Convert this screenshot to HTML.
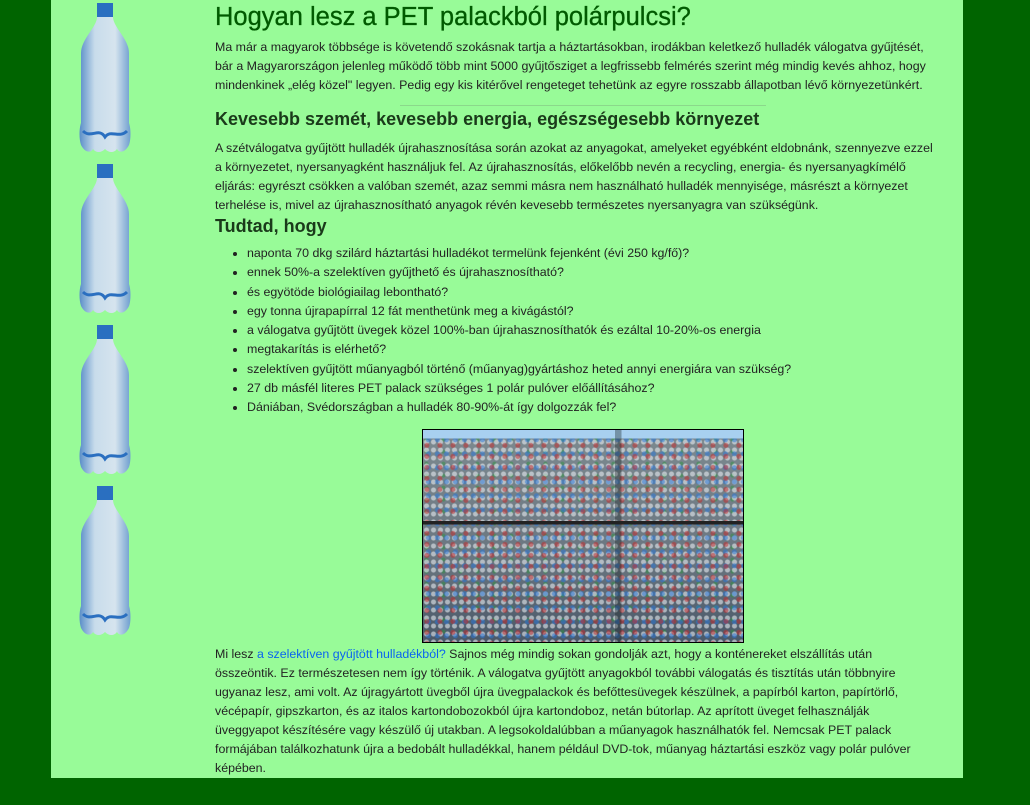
<!DOCTYPE html>
<html><head><meta charset="utf-8">
<style>
html,body{margin:0;padding:0;background:#006400;width:1030px;height:805px;overflow:hidden}
body{font-family:"Liberation Sans",sans-serif;color:#222}
#wrap{position:absolute;left:51px;top:0;width:912px;height:778px;background:#98fb98}
.b{position:absolute;left:28px;width:52px;height:152px}
#c{position:absolute;left:164px;top:0;width:750px;font-size:12.4px;line-height:19px}
#c .l{white-space:nowrap}
h1{position:absolute;left:0;top:0;margin:0;font-size:25.5px;font-weight:normal;color:#005a00;line-height:34px;-webkit-text-stroke:0.3px #005a00}
h2{position:absolute;left:0;margin:0;font-size:18px;font-weight:bold;color:#1a3a1a;line-height:24px}
.p{position:absolute;left:0}
ul{position:absolute;left:0;margin:0;padding-left:32px;top:244px}
li{line-height:19.3px;white-space:nowrap}
a{color:#0a64f0;text-decoration:none}
#img{position:absolute;left:207px;top:429px;width:320px;height:212px;border:1px solid #000;
background:
linear-gradient(180deg,rgba(0,0,0,0) 0 43%,#222 43% 44.5%,rgba(0,0,0,0) 44.5%),
linear-gradient(90deg,rgba(0,0,0,0) 0 60%,rgba(20,30,30,.35) 60% 62%,rgba(0,0,0,0) 62%),
linear-gradient(180deg,#a8d0f0 0 4%,rgba(0,0,0,0) 4%),
radial-gradient(circle at 30% 40%,rgba(200,40,40,.5) 0 2px,rgba(0,0,0,0) 3px) 0 0/13px 11px,
radial-gradient(circle at 60% 70%,rgba(40,120,220,.5) 0 2px,rgba(0,0,0,0) 3px) 0 0/9px 14px,
radial-gradient(circle at 50% 50%,rgba(230,235,240,.6) 0 2px,rgba(0,0,0,0) 3px) 0 0/7px 8px,
radial-gradient(circle at 20% 80%,rgba(40,150,60,.45) 0 1.5px,rgba(0,0,0,0) 2.5px) 0 0/17px 12px,
linear-gradient(180deg,#7d8a90 0,#6a7680 60%,#4a5868 100%)}
</style></head><body>
<div id="wrap">
<svg width="0" height="0" style="position:absolute"><defs>
<linearGradient id="g" x1="0" x2="1"><stop offset="0" stop-color="#5a8fc8"/><stop offset=".3" stop-color="#c8dceb"/><stop offset=".7" stop-color="#d6e4ee"/><stop offset="1" stop-color="#6f9fcf"/></linearGradient>
<symbol id="bt" viewBox="0 0 52 152"><rect x="18" y="0" width="16" height="14" fill="#2a6fc0"/><path d="M18 14 h16 c0 10 16 22 16 36 v70 c2 6 2 16 0 22 c-4 8 -10 8 -12 4 c-3 4 -8 4 -12 0 c-4 4 -9 4 -12 0 c-2 4 -8 4 -12 -4 c-2 -6 -2 -16 0 -22 v-70 c0 -14 16 -26 16 -36z" fill="url(#g)"/><path d="M4 128 c8 8 16 -4 22 6 c6 -8 14 2 22 -6" stroke="#2a6fc0" stroke-width="3" fill="none"/></symbol></defs></svg>
<svg class="b" style="top:3px"><use href="#bt"/></svg>
<svg class="b" style="top:164px"><use href="#bt"/></svg>
<svg class="b" style="top:325px"><use href="#bt"/></svg>
<svg class="b" style="top:486px"><use href="#bt"/></svg>
<div id="c">
<h1>Hogyan lesz a PET palackból polárpulcsi?</h1>
<div class="p" style="top:38px">
<div class="l">Ma már a magyarok többsége is követendő szokásnak tartja a háztartásokban, irodákban keletkező hulladék válogatva gyűjtését,</div>
<div class="l">bár a Magyarországon jelenleg működő több mint 5000 gyűjtősziget a legfrissebb felmérés szerint még mindig kevés ahhoz, hogy</div>
<div class="l">mindenkinek „elég közel" legyen. Pedig egy kis kitérővel rengeteget tehetünk az egyre rosszabb állapotban lévő környezetünkért.</div>
</div>
<div style="position:absolute;left:185px;top:105px;width:366px;height:1px;background:#8bd88b"></div>
<h2 style="top:107px">Kevesebb szemét, kevesebb energia, egészségesebb környezet</h2>
<div class="p" style="top:139px">
<div class="l">A szétválogatva gyűjtött hulladék újrahasznosítása során azokat az anyagokat, amelyeket egyébként eldobnánk, szennyezve ezzel</div>
<div class="l">a környezetet, nyersanyagként használjuk fel. Az újrahasznosítás, előkelőbb nevén a recycling, energia- és nyersanyagkímélő</div>
<div class="l">eljárás: egyrészt csökken a valóban szemét, azaz semmi másra nem használható hulladék mennyisége, másrészt a környezet</div>
<div class="l">terhelése is, mivel az újrahasznosítható anyagok révén kevesebb természetes nyersanyagra van szükségünk.</div>
</div>
<h2 style="top:214px">Tudtad, hogy</h2>
<ul>
<li>naponta 70 dkg szilárd háztartási hulladékot termelünk fejenként (évi 250 kg/fő)?</li>
<li>ennek 50%-a szelektíven gyűjthető és újrahasznosítható?</li>
<li>és egyötöde biológiailag lebontható?</li>
<li>egy tonna újrapapírral 12 fát menthetünk meg a kivágástól?</li>
<li>a válogatva gyűjtött üvegek közel 100%-ban újrahasznosíthatók és ezáltal 10-20%-os energia</li>
<li>megtakarítás is elérhető?</li>
<li>szelektíven gyűjtött műanyagból történő (műanyag)gyártáshoz heted annyi energiára van szükség?</li>
<li>27 db másfél literes PET palack szükséges 1 polár pulóver előállításához?</li>
<li>Dániában, Svédországban a hulladék 80-90%-át így dolgozzák fel?</li>
</ul>
<div id="img"></div>
<div class="p" style="top:645px">
<div class="l">Mi lesz <a>a szelektíven gyűjtött hulladékból?</a> Sajnos még mindig sokan gondolják azt, hogy a konténereket elszállítás után</div>
<div class="l">összeöntik. Ez természetesen nem így történik. A válogatva gyűjtött anyagokból további válogatás és tisztítás után többnyire</div>
<div class="l">ugyanaz lesz, ami volt. Az újragyártott üvegből újra üvegpalackok és befőttesüvegek készülnek, a papírból karton, papírtörlő,</div>
<div class="l">vécépapír, gipszkarton, és az italos kartondobozokból újra kartondoboz, netán bútorlap. Az aprított üveget felhasználják</div>
<div class="l">üveggyapot készítésére vagy készülő új utakban. A legsokoldalúbban a műanyagok használhatók fel. Nemcsak PET palack</div>
<div class="l">formájában találkozhatunk újra a bedobált hulladékkal, hanem például DVD-tok, műanyag háztartási eszköz vagy polár pulóver</div>
<div class="l">képében.</div>
</div>
</div>
</div>
</body></html>
